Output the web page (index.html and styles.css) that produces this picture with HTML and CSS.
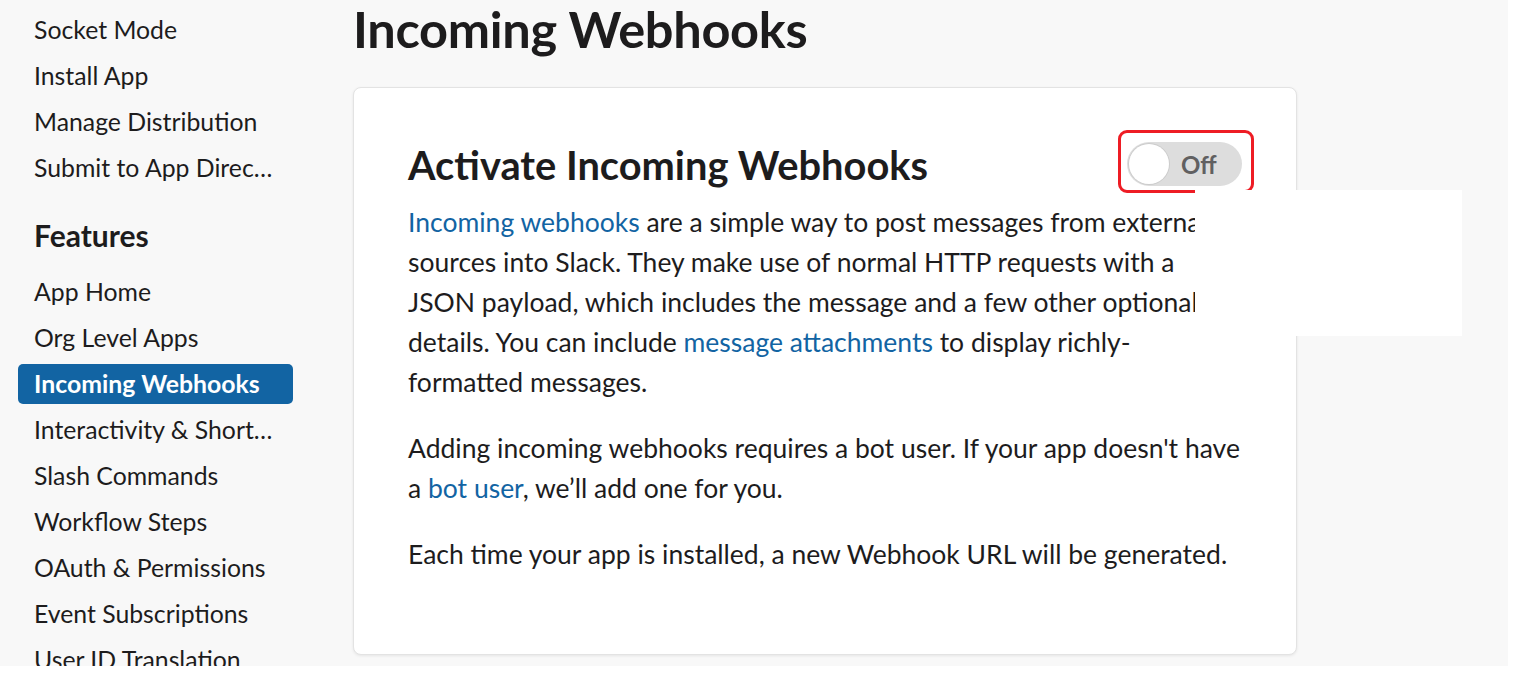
FILE: index.html
```html
<!DOCTYPE html>
<html lang="en">
<head>
<meta charset="utf-8">
<title>Incoming Webhooks</title>
<link rel="stylesheet" href="styles.css">
</head>
<body>
<div class="page">
  <nav class="sidebar">
    <a class="nav-item">Socket Mode</a>
    <a class="nav-item">Install App</a>
    <a class="nav-item">Manage Distribution</a>
    <a class="nav-item">Submit to App Direc…</a>
    <h3 class="nav-heading">Features</h3>
    <a class="nav-item">App Home</a>
    <a class="nav-item">Org Level Apps</a>
    <a class="nav-item active">Incoming Webhooks</a>
    <a class="nav-item">Interactivity &amp; Short…</a>
    <a class="nav-item">Slash Commands</a>
    <a class="nav-item">Workflow Steps</a>
    <a class="nav-item">OAuth &amp; Permissions</a>
    <a class="nav-item">Event Subscriptions</a>
    <a class="nav-item">User ID Translation</a>
  </nav>
  <main class="main">
    <h1 class="title">Incoming Webhooks</h1>
    <section class="card">
      <div class="card-head">
        <h2 class="card-title">Activate Incoming Webhooks</h2>
        <div class="toggle">
          <span class="knob"></span>
          <span class="toggle-label">Off</span>
          <span class="highlight-box"></span>
        </div>
      </div>
      <p class="para first"><a class="link">Incoming webhooks</a> are a simple way to post messages from external sources into Slack. They make use of normal HTTP requests with a JSON payload, which includes the message and a few other optional details. You can include <a class="link">message attachments</a> to display richly-formatted messages.</p>
      <p class="para">Adding incoming webhooks requires a bot user. If your app doesn't have a <a class="link">bot user</a>, we’ll add one for you.</p>
      <p class="para">Each time your app is installed, a new Webhook URL will be generated.</p>
    </section>
  </main>
  <div class="cover"></div>
</div>
</body>
</html>
```
FILE: styles.css
```css
html, body {
  margin: 0;
  padding: 0;
  background: #ffffff;
}
body {
  font-family: Lato, "Open Sans", "Liberation Sans", sans-serif;
  color: #1d1c1d;
}
.page {
  position: relative;
  width: 1508px;
  height: 666px;
  background: #f8f8f8;
  overflow: hidden;
  display: flex;
}
.sidebar {
  width: 335px;
  flex: none;
  display: flex;
  flex-direction: column;
  padding-top: 10px;
}
.nav-item {
  display: block;
  margin: 0 0 6px 18px;
  width: 275px;
  box-sizing: border-box;
  height: 40px;
  line-height: 40px;
  padding-left: 16px;
  font-size: 24.8px;
  border-radius: 5px;
  white-space: nowrap;
  flex: none;
}
.nav-item.active {
  background: #1264a3;
  color: #ffffff;
  font-weight: 700;
}
.nav-heading {
  margin: 21px 0 17px 34px;
  height: 40px;
  line-height: 40px;
  font-size: 30px;
  font-weight: 700;
  flex: none;
}
.main {
  flex: none;
  width: 944px;
  margin-left: 18px;
}
.title {
  margin: 0;
  height: 87px;
  font-size: 50.5px;
  line-height: 57px;
  font-weight: 700;
  letter-spacing: -0.3px;
}
.card {
  box-sizing: border-box;
  width: 944px;
  height: 568px;
  background: #ffffff;
  border: 1px solid #e3e3e3;
  border-radius: 8px;
  box-shadow: 0 1px 3px rgba(0,0,0,0.08);
  padding: 54px 54px 0 54px;
}
.card-head {
  display: flex;
  justify-content: space-between;
  align-items: center;
  height: 44px;
}
.card-title {
  margin: 0;
  font-size: 39.8px;
  line-height: 44px;
  font-weight: 700;
  position: relative;
  top: 1px;
  white-space: nowrap;
}
.toggle {
  position: relative;
  width: 115px;
  height: 44px;
  border-radius: 22px;
  background: #dddddd;
  display: flex;
  align-items: center;
  box-sizing: border-box;
  flex: none;
}
.knob {
  width: 40px;
  height: 40px;
  margin-left: 2px;
  border-radius: 50%;
  background: #ffffff;
  box-shadow: 0 0 0 1px #cccccc;
}
.toggle-label {
  margin-left: 12px;
  font-size: 24px;
  font-weight: 700;
  color: #616061;
}
.highlight-box {
  position: absolute;
  left: -9px;
  top: -12px;
  width: 136px;
  height: 63px;
  box-sizing: border-box;
  border: 3px solid #ee1c24;
  border-radius: 9px;
}
.para {
  margin: 0;
  font-size: 26.5px;
  line-height: 40px;
  margin-top: 26px;
}
.para.first {
  margin-top: 16px;
}
.link {
  color: #1264a3;
}
.cover {
  position: absolute;
  left: 1195px;
  top: 190px;
  width: 267px;
  height: 146px;
  background: #ffffff;
}
```
